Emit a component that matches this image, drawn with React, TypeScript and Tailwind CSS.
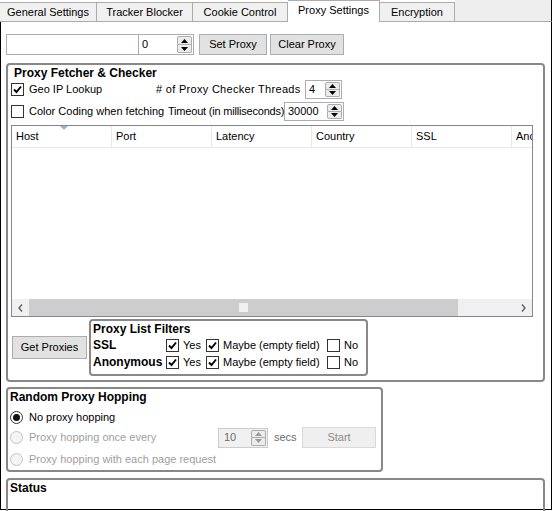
import React from "react";

function Check({ checked }: { checked?: boolean }) {
  return (
    <span className="w-[13px] h-[13px] border border-[#333333] bg-white flex items-center justify-center shrink-0">
      {checked && (
        <svg viewBox="0 0 11 11" className="w-[11px] h-[11px]">
          <path d="M2 5.5 L4.5 8 L9 2.5" stroke="#000" strokeWidth="1.9" fill="none" />
        </svg>
      )}
    </span>
  );
}

function Radio({ checked, disabled }: { checked?: boolean; disabled?: boolean }) {
  return (
    <span
      className={`w-[13px] h-[13px] rounded-full border flex items-center justify-center shrink-0 ${
        disabled ? "border-[#c4c4c4] bg-[#f4f4f4]" : "border-[#333333] bg-white"
      }`}
    >
      {checked && <span className="w-[7px] h-[7px] rounded-full bg-[#111]" />}
    </span>
  );
}

function Arrows({ disabled }: { disabled?: boolean }) {
  const c = disabled ? "#9a9a9a" : "#000";
  return (
    <div className="w-[15px] flex flex-col my-[1px] mr-[1px]">
      <div className="flex-1 flex items-center justify-center bg-[#ececec] border border-[#acacac] rounded-t-[2px]">
        <svg width="7" height="4" viewBox="0 0 7 4">
          <path d="M0 4 L3.5 0 L7 4 Z" fill={c} />
        </svg>
      </div>
      <div className="flex-1 flex items-center justify-center bg-[#ececec] border border-t-0 border-[#acacac] rounded-b-[2px]">
        <svg width="7" height="4" viewBox="0 0 7 4">
          <path d="M0 0 L7 0 L3.5 4 Z" fill={c} />
        </svg>
      </div>
    </div>
  );
}

export default function App() {
  const tab = "h-[20px] mt-[2px] bg-[#f0f0f0] border border-l-0 border-[#acacac] flex items-center justify-center";
  return (
    <div
      className="w-[552px] h-[511px] overflow-hidden bg-white text-[11px] leading-[13px] text-black"
      style={{ fontFamily: '"Liberation Sans", Arial, sans-serif' }}
    >
      {/* Tab strip */}
      <div className="flex h-[22px] bg-[#eeeeee] border-r border-black">
        <div className="flex bg-white">
          <div className={`${tab} w-[97px] border-l`}>General Settings</div>
          <div className={`${tab} w-[96px]`}>Tracker Blocker</div>
          <div className={`${tab} w-[95px]`}>Cookie Control</div>
          <div className="w-[92px] h-[22px] bg-white border border-b-0 border-l-0 border-[#acacac] flex justify-center pt-[3px] relative z-10">
            Proxy Settings
          </div>
          <div className={`${tab} w-[75px]`}>Encryption</div>
        </div>
      </div>

      {/* Page */}
      <div className="h-[489px] border-l border-r border-b border-black border-t border-t-[#acacac] -mt-[1px] px-[5px] pt-[12px]">
        {/* Top row */}
        <div className="flex items-center h-[21px]">
          <div className="w-[133px] h-[21px] border border-[#abadb3] bg-white" />
          <div className="w-[55px] h-[21px] border border-[#abadb3] border-l-0 bg-white flex">
            <div className="flex-1 pl-[3px] flex items-center">0</div>
            <Arrows />
          </div>
          <button className="ml-[5px] w-[68px] h-[21px] bg-[#e1e1e1] border border-[#adadad]">Set Proxy</button>
          <button className="ml-[3px] w-[74px] h-[21px] bg-[#e1e1e1] border border-[#adadad]">Clear Proxy</button>
        </div>

        {/* Proxy Fetcher & Checker */}
        <div className="mt-[8px] w-[539px] h-[319px] border-2 border-[#888888] rounded-[4px] px-[3px] pt-[1px]">
          <div className="font-bold text-[12px] leading-[14px] pl-[3px]">Proxy Fetcher &amp; Checker</div>
          <div className="flex items-center h-[19px] whitespace-nowrap">
            <Check checked />
            <span className="ml-[5px] w-[127px] shrink-0">Geo IP Lookup</span>
            <span className="w-[149px] shrink-0 tracking-[0.3px]">#&nbsp;of Proxy Checker Threads</span>
            <div className="w-[37px] h-[19px] border border-[#abadb3] bg-white flex shrink-0">
              <div className="flex-1 pl-[3px] flex items-center">4</div>
              <Arrows />
            </div>
          </div>
          <div className="flex items-center h-[19px] mt-[3px] whitespace-nowrap">
            <Check />
            <span className="ml-[5px] w-[139px] shrink-0">Color Coding when fetching</span>
            <span className="w-[116px] shrink-0 tracking-[-0.2px]">Timeout (in milliseconds)</span>
            <div className="w-[60px] h-[19px] border border-[#abadb3] bg-white flex shrink-0">
              <div className="flex-1 pl-[3px] flex items-center">30000</div>
              <Arrows />
            </div>
          </div>

          {/* List view */}
          <div className="mt-[4px] w-[522px] h-[192px] border border-[#828790] bg-white flex flex-col overflow-hidden">
            <div className="flex h-[22px] border-b border-[#e5eaf1] shrink-0 whitespace-nowrap">
              {["Host", "Port", "Latency", "Country", "SSL", "Anonymous"].map((h, i) => (
                <div
                  key={h}
                  className="w-[100px] shrink-0 border-r border-[#e8e8e8] pl-[4px] flex items-center relative"
                >
                  {i === 0 && (
                    <svg className="absolute left-[48px] top-0" width="8" height="4" viewBox="0 0 8 4">
                      <path d="M0 0 L8 0 L4 4 Z" fill="#97b4d6" />
                    </svg>
                  )}
                  {h}
                </div>
              ))}
            </div>
            <div className="flex-1" />
            <div className="h-[17px] bg-[#f0f0f0] flex items-center shrink-0">
              <div className="w-[17px] flex items-center justify-center">
                <svg width="5" height="8" viewBox="0 0 5 8">
                  <path d="M4 0.5 L1 4 L4 7.5" stroke="#606060" strokeWidth="1.4" fill="none" />
                </svg>
              </div>
              <div className="w-[429px] h-[17px] bg-[#cdcdcd] flex items-center justify-center">
                <div className="w-[9px] h-[9px] bg-[#f0f0f0]" />
              </div>
              <div className="flex-1" />
              <div className="w-[17px] flex items-center justify-center">
                <svg width="5" height="8" viewBox="0 0 5 8">
                  <path d="M1 0.5 L4 4 L1 7.5" stroke="#606060" strokeWidth="1.4" fill="none" />
                </svg>
              </div>
            </div>
          </div>

          {/* Bottom of group */}
          <div className="flex items-start mt-[2px]">
            <button className="mt-[17px] ml-[1px] w-[75px] h-[23px] bg-[#e1e1e1] border border-[#adadad]">
              Get Proxies
            </button>
            <div className="ml-[2px] w-[279px] h-[57px] border-2 border-[#888888] rounded-[4px] px-[2px] pt-[1px]">
              <div className="font-bold text-[12px] leading-[14px]">Proxy List Filters</div>
              {["SSL", "Anonymous"].map((r) => (
                <div key={r} className="flex items-center h-[16px] mt-[1px]">
                  <span className="w-[73px] font-bold text-[12px]">{r}</span>
                  <Check checked />
                  <span className="ml-[4px] w-[23px]">Yes</span>
                  <Check checked />
                  <span className="ml-[4px] w-[104px]">Maybe (empty field)</span>
                  <Check />
                  <span className="ml-[4px]">No</span>
                </div>
              ))}
            </div>
          </div>
        </div>

        {/* Random Proxy Hopping */}
        <div className="mt-[5px] w-[377px] h-[85px] border-2 border-[#888888] rounded-[4px] px-[2px] pt-[1px]">
          <div className="font-bold text-[12px] leading-[14px]">Random Proxy Hopping</div>
          <div className="flex items-center h-[16px] mt-[5px]">
            <Radio checked />
            <span className="ml-[6px]">No proxy hopping</span>
          </div>
          <div className="flex items-center h-[21px] mt-[2px] text-[#a0a0a0]">
            <Radio disabled />
            <span className="ml-[6px] w-[189px]">Proxy hopping once every</span>
            <div className="w-[50px] h-[20px] border border-[#cccccc] bg-[#f0f0f0] flex text-[#6d6d6d]">
              <div className="flex-1 pl-[5px] flex items-center">10</div>
              <Arrows disabled />
            </div>
            <span className="ml-[6px] w-[28px] text-[#6d6d6d]">secs</span>
            <button className="w-[74px] h-[21px] bg-[#efefef] border border-[#d9d9d9] text-[#8a8a8a]">Start</button>
          </div>
          <div className="flex items-center h-[16px] mt-[3px] text-[#a0a0a0]">
            <Radio disabled />
            <span className="ml-[6px]">Proxy hopping with each page request</span>
          </div>
        </div>

        {/* Status */}
        <div className="mt-[6px] w-[539px] h-[60px] border-2 border-[#888888] rounded-[4px] px-[2px] pt-[1px]">
          <div className="font-bold text-[12px] leading-[14px]">Status</div>
        </div>
      </div>
    </div>
  );
}
